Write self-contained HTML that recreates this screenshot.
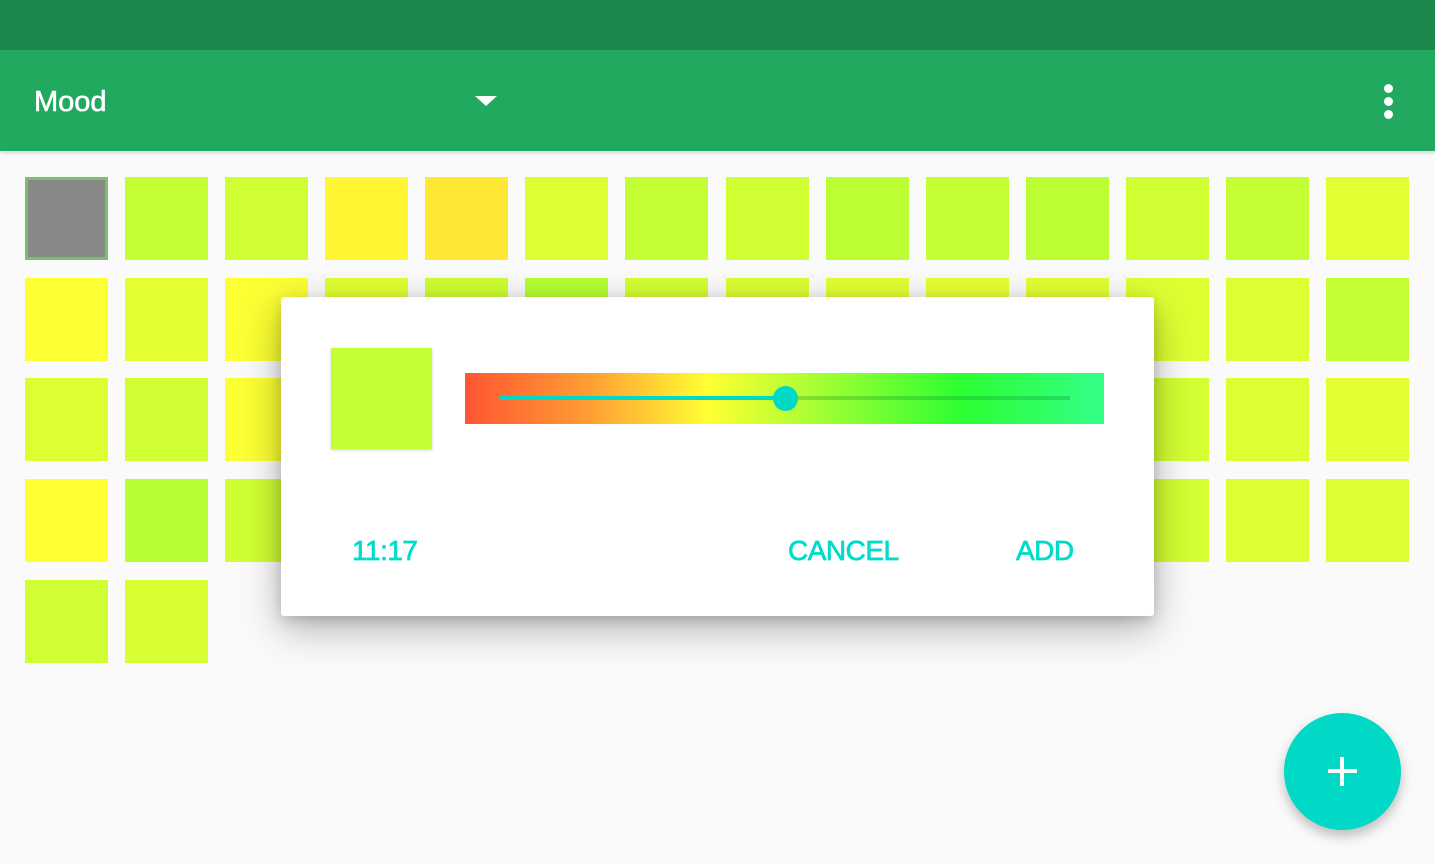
<!DOCTYPE html>
<html><head><meta charset="utf-8"><style>
*{margin:0;padding:0;box-sizing:border-box}
body{width:1435px;height:864px;background:#fafafa;position:relative;overflow:hidden;font-family:"Liberation Sans",sans-serif}
.sb{position:absolute;left:0;top:0;width:1435px;height:50px;background:#1b874c}
.tb{position:absolute;left:0;top:50px;width:1435px;height:101px;background:#21a95f;box-shadow:0 2px 4px rgba(0,0,0,.15)}
.title{position:absolute;left:34px;top:84px;color:#fff;font-size:29px;line-height:36px;-webkit-text-stroke:0.6px #fff}
.tri{position:absolute;left:475px;top:96px;width:0;height:0;border-left:11px solid transparent;border-right:11px solid transparent;border-top:10px solid #fff}
.dot{position:absolute;left:1384px;width:9px;height:9px;border-radius:50%;background:#fff}
.sq{position:absolute;width:83px;height:83px}
.dlg{position:absolute;left:281px;top:297px;width:873px;height:319px;background:#fff;border-radius:3px;box-shadow:0 12px 40px rgba(0,0,0,.3),0 4px 12px rgba(0,0,0,.15)}
.prev{position:absolute;left:331px;top:348px;width:101px;height:101px;background:#c3ff33;box-shadow:0 1px 3px rgba(0,0,0,.2)}
.bar{position:absolute;left:465px;top:373px;width:639px;height:51px;background:linear-gradient(90deg,#ff5533 0%,#ffa033 20%,#ffff33 38%,#a6ff33 55%,#2cff33 78%,#33ff88 100%)}
.trk1{position:absolute;left:499px;top:396px;width:286px;height:4px;background:#00d9c5}
.trk2{position:absolute;left:785px;top:396px;width:285px;height:4px;background:rgba(0,120,40,.25)}
.thumb{position:absolute;left:773px;top:386px;width:25px;height:25px;border-radius:50%;background:#00d9c5}
.btn{position:absolute;top:534px;color:#00dcc8;font-size:28px;line-height:34px;-webkit-text-stroke:0.7px #00dcc8;letter-spacing:-0.5px}
.fab{position:absolute;left:1284px;top:713px;width:117px;height:117px;border-radius:50%;background:#00d9c5;box-shadow:0 6px 12px rgba(0,0,0,.25)}
.ph{position:absolute;left:1328px;top:769px;width:29px;height:4px;background:#fff}
.pv{position:absolute;left:1340px;top:757px;width:4px;height:29px;background:#fff}
</style></head><body>
<div class="sb"></div>
<div class="tb"></div>
<div class="title">Mood</div>
<div class="tri"></div>
<div class="dot" style="top:84px"></div>
<div class="dot" style="top:97px"></div>
<div class="dot" style="top:110px"></div>

<div class="sq" style="left:25px;top:177px;background:#888;border:3px solid #7cbd6e"></div>
<div class="sq" style="left:125px;top:177px;background:#c3ff33"></div>
<div class="sq" style="left:225px;top:177px;background:#cfff33"></div>
<div class="sq" style="left:325px;top:177px;background:#fff533"></div>
<div class="sq" style="left:425px;top:177px;background:#ffe833"></div>
<div class="sq" style="left:525px;top:177px;background:#dbff33"></div>
<div class="sq" style="left:625px;top:177px;background:#c3ff33"></div>
<div class="sq" style="left:726px;top:177px;background:#cfff33"></div>
<div class="sq" style="left:826px;top:177px;background:#bbff33"></div>
<div class="sq" style="left:926px;top:177px;background:#c3ff33"></div>
<div class="sq" style="left:1026px;top:177px;background:#bbff33"></div>
<div class="sq" style="left:1126px;top:177px;background:#cfff33"></div>
<div class="sq" style="left:1226px;top:177px;background:#c3ff33"></div>
<div class="sq" style="left:1326px;top:177px;background:#e3ff33"></div>

<div class="sq" style="left:25px;top:278px;background:#fbff33"></div>
<div class="sq" style="left:125px;top:278px;background:#e3ff33"></div>
<div class="sq" style="left:225px;top:278px;background:#fbff33"></div>
<div class="sq" style="left:325px;top:278px;background:#e3ff33"></div>
<div class="sq" style="left:425px;top:278px;background:#cfff33"></div>
<div class="sq" style="left:525px;top:278px;background:#b6ff33"></div>
<div class="sq" style="left:625px;top:278px;background:#d3ff33"></div>
<div class="sq" style="left:726px;top:278px;background:#dbff33"></div>
<div class="sq" style="left:826px;top:278px;background:#e3ff33"></div>
<div class="sq" style="left:926px;top:278px;background:#e7ff33"></div>
<div class="sq" style="left:1026px;top:278px;background:#e3ff33"></div>
<div class="sq" style="left:1126px;top:278px;background:#dfff33"></div>
<div class="sq" style="left:1226px;top:278px;background:#dbff33"></div>
<div class="sq" style="left:1326px;top:278px;background:#c3ff33"></div>

<div class="sq" style="left:25px;top:378px;background:#dbff33"></div>
<div class="sq" style="left:125px;top:378px;background:#cfff33"></div>
<div class="sq" style="left:225px;top:378px;background:#fbff33"></div>
<div class="sq" style="left:1126px;top:378px;background:#d3ff33"></div>
<div class="sq" style="left:1226px;top:378px;background:#dbff33"></div>
<div class="sq" style="left:1326px;top:378px;background:#e3ff33"></div>

<div class="sq" style="left:25px;top:479px;background:#ffff33"></div>
<div class="sq" style="left:125px;top:479px;background:#b6ff33"></div>
<div class="sq" style="left:225px;top:479px;background:#cfff33"></div>
<div class="sq" style="left:1126px;top:479px;background:#d3ff33"></div>
<div class="sq" style="left:1226px;top:479px;background:#dbff33"></div>
<div class="sq" style="left:1326px;top:479px;background:#dbff33"></div>

<div class="sq" style="left:25px;top:580px;background:#cfff33"></div>
<div class="sq" style="left:125px;top:580px;background:#d7ff33"></div>

<div class="dlg"></div>
<div class="prev"></div>
<div class="bar"></div>
<div class="trk1"></div>
<div class="trk2"></div>
<div class="thumb"></div>
<div class="btn" style="left:352px">11:17</div>
<div class="btn" style="left:788px">CANCEL</div>
<div class="btn" style="left:1016px">ADD</div>

<div class="fab"></div>
<div class="ph"></div>
<div class="pv"></div>
</body></html>
